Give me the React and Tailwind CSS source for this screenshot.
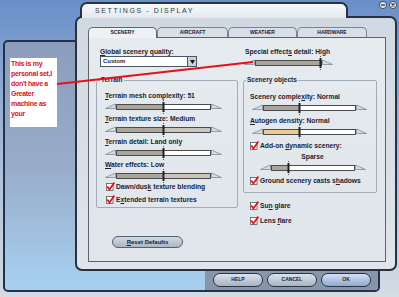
import React from 'react';

const txt = "font-['Liberation_Sans',Arial,sans-serif]";

const Tri = ({ dir }) => (
  <svg width="11" height="9" viewBox="0 0 11 9" className="shrink-0">
    {dir === 'left' ? (
      <polygon points="0.5,6.5 10.5,2 10.5,6.5" fill="#d6dde6" stroke="#7f8a9a" strokeWidth="0.8" />
    ) : (
      <polygon points="0.5,2 10.5,6.5 0.5,6.5" fill="#d6dde6" stroke="#7f8a9a" strokeWidth="0.8" />
    )}
  </svg>
);

const Slider = ({ w, at, left = 'bg-[#aba69d]', right = 'bg-white' }) => {
  const fill = Math.round(at * (w - 2));
  return (
    <div className="flex items-center h-[11px]">
      <Tri dir="left" />
      <div className="relative h-[6px] border border-[#4a4a4a] flex" style={{ width: w }}>
        <div className={left} style={{ width: fill }} />
        <div className={`flex-1 ${right}`} />
        <svg width="3" height="14" viewBox="0 0 3 14" className="absolute top-[-5px]" style={{ left: fill - 2 }}>
          <rect x="1" y="0" width="1" height="1" fill="#555" />
          <rect x="0.5" y="2" width="2" height="10" fill="#222" />
          <rect x="1" y="13" width="1" height="1" fill="#555" />
        </svg>
      </div>
      <Tri dir="right" />
    </div>
  );
};

const Label = ({ children, className = '' }) => (
  <div className={`text-[6.7px] leading-[8px] font-bold text-[#1b2130] whitespace-nowrap ${className}`}>{children}</div>
);

const Check = ({ children, className = '' }) => (
  <div className={`flex items-center gap-[1px] h-[9px] ${className}`}>
    <svg width="9" height="9" viewBox="0 0 9 9" className="shrink-0">
      <rect x="0.5" y="1.5" width="6.5" height="7" fill="#fff" stroke="#5a5a5a" strokeWidth="0.8" />
      <path d="M1.3 4.6 L3.4 7.6 L8.4 0.6" fill="none" stroke="#e0141c" strokeWidth="1.7" />
    </svg>
    <span className="text-[6.7px] font-bold leading-[8px] text-[#1b2130] whitespace-nowrap">{children}</span>
  </div>
);

const Item = ({ label, children }) => (
  <div className="flex flex-col">
    <Label>{label}</Label>
    <div className="mt-[1px]">{children}</div>
  </div>
);

const PillButton = ({ children, blue }) => (
  <div
    className={`w-[50px] h-[14px] rounded-full border border-[#2a3548] flex items-center justify-center text-[5px] font-bold text-[#1b2130] ${
      blue ? 'bg-gradient-to-b from-[#d3e0f2] to-[#8faad3]' : 'bg-gradient-to-b from-[#dbe2ea] to-[#a7b3c3]'
    }`}
  >
    {children}
  </div>
);

const Tab = ({ children, w, active }) => (
  <div
    className={`${w} flex items-center justify-center rounded-t-[5px] border border-b-0 text-[5px] font-bold text-[#1b2130] ${
      active ? 'h-[11px] -mb-px z-10 bg-[#eef2f5] border-[#5e6670]' : 'h-[10px] bg-[#d8dfe6] border-[#7a838e]'
    }`}
  >
    {children}
  </div>
);

const noteLines = ['This is my', 'personal set,I', "don't have a", 'Greater', 'machine as', 'your'];

export default function App() {
  return (
    <div className={`relative w-[399px] h-[297px] overflow-hidden bg-gradient-to-b from-[#6a8fc8] via-[#a3bbd8] to-[#d4dce4] ${txt}`}>
      {/* back window */}
      <div className="absolute left-[3px] top-[40px] w-[377px] h-[252px] rounded-[5px] border-2 border-[#25304a] bg-gradient-to-b from-[#8b9dbb] via-[#98acc9] to-[#a8d0f2] flex flex-col overflow-hidden">
        <div className="flex-1" />
        <div className="flex h-[22px]">
          <div className="flex-1" />
          <div className="w-[173px] bg-[#8795a9] flex items-center gap-[4px] pl-[8px] pt-[2px]">
            <PillButton>HELP</PillButton>
            <PillButton>CANCEL</PillButton>
            <PillButton blue>OK</PillButton>
          </div>
        </div>
      </div>

      {/* main dialog */}
      <div className="absolute left-[75px] top-[16px] w-[322px] h-[255px] rounded-[7px] border-2 border-[#283142] bg-gradient-to-b from-[#d0d8e1] to-[#dfe5ea] pt-[9px] pl-[11px] pr-[9px] pb-[7px] flex flex-col">
        <div className="flex items-end h-[10px]">
          <Tab w="w-[69px]" active>SCENERY</Tab>
          <Tab w="w-[71px]">AIRCRAFT</Tab>
          <Tab w="w-[69px]">WEATHER</Tab>
          <Tab w="w-[70px]">HARDWARE</Tab>
        </div>
        <div className="flex-1 border border-[#5c646e] bg-gradient-to-b from-[#e6ebef] to-[#dfe5ea] pt-[10px] pl-[7px] pr-[8px] flex gap-[5px]">
          {/* left column */}
          <div className="w-[142px] flex flex-col">
            <div className="pl-[4px]">
              <Label><u>G</u>lobal scenery quality:</Label>
              <div className="flex h-[11px] w-[97px] border border-[#4b5563] bg-white">
                <div className="flex-1 text-[6px] font-bold leading-[9px] pl-[2px] text-[#1b2130]">Custom</div>
                <div className="w-[9px] border-l border-[#4b5563] bg-[#c9d1db] flex items-center justify-center">
                  <svg width="5" height="4" viewBox="0 0 5 4"><polygon points="0,0 5,0 2.5,4" fill="#111" /></svg>
                </div>
              </div>
            </div>
            <fieldset className="mt-[9px] border border-[#a3acb6] rounded-[2px] pl-[8px] pr-[4px] pb-[3px]">
              <legend className="ml-[-5px] px-[1px] text-[6.5px] font-bold leading-[8px] text-[#1b2130]">Terrain</legend>
              <div className="flex flex-col gap-[3px] mt-[8px]">
                <Item label={<><u>T</u>errain mesh complexity: 51</>}><Slider w={95} at={0.5} /></Item>
                <Item label={<><u>T</u>errain texture size: Medium</>}><Slider w={95} at={0.5} right="bg-[#c9c5be]" /></Item>
                <Item label={<><u>T</u>errain detail: Land only</>}><Slider w={95} at={0.5} /></Item>
                <Item label={<><u>W</u>ater effects: Low</>}><Slider w={95} at={0.5} right="bg-[#c9c5be]" /></Item>
              </div>
              <div className="flex flex-col gap-[4px] mt-[1px] ml-[1px]">
                <Check>Dawn/dus<u>k</u> texture blending</Check>
                <Check>E<u>x</u>tended terrain textures</Check>
              </div>
            </fieldset>
            <div className="mt-[28px] ml-[16px] w-[71px] h-[12px] rounded-full border border-[#55606f] bg-gradient-to-b from-[#d3dbe4] to-[#aab6c5] flex items-center justify-center text-[6px] font-bold text-[#1b2130]">
              <span><u>R</u>eset Defaults</span>
            </div>
          </div>

          {/* right column */}
          <div className="w-[134px] flex flex-col">
            <Label className="pl-[2px]">Special effect<u>s</u> detail: High</Label>
            <div className="pl-[1px] mt-[1px]"><Slider w={67} at={1} right="bg-[#aba69d]" /></div>
            <fieldset className="mt-[8px] border border-[#a3acb6] rounded-[2px] pl-[6px] pr-[4px] pb-[7px]">
              <legend className="ml-[-4px] px-[1px] text-[6.5px] font-bold leading-[8px] text-[#1b2130]">Scenery objects</legend>
              <div className="flex flex-col gap-[4px] mt-[9px]">
                <Item label={<>Scenery comple<u>x</u>ity: Normal</>}><div className="ml-[2px]"><Slider w={93} at={0.4} /></div></Item>
                <Item label={<><u>A</u>utogen density: Normal</>}><div className="ml-[2px]"><Slider w={93} at={0.4} left="bg-[#eccb92]" /></div></Item>
              </div>
              <Check className="mt-[4px]">Add-on <u>d</u>ynamic scenery:</Check>
              <Label className="mt-[3px] ml-[10px] w-[105px] text-center">Sparse</Label>
              <div className="mt-[1px] ml-[10px]"><Slider w={84} at={0.21} /></div>
              <Check className="mt-[3px]">Ground scenery casts s<u>h</u>adows</Check>
            </fieldset>
            <div className="pl-[7px] flex flex-col gap-[6px] mt-[8px]">
              <Check>Su<u>n</u> glare</Check>
              <Check>Lens <u>f</u>lare</Check>
            </div>
          </div>
        </div>
      </div>

      {/* title tab */}
      <div className="absolute left-[80px] top-[2px] w-[268px] h-[16px] z-10 rounded-t-[7px] border-2 border-b-0 border-[#283142] bg-gradient-to-b from-[#f7f9fb] to-[#e4e9ee] pl-[13px] pt-[2px]">
        <div className="text-[7px] leading-[9px] tracking-[1.6px] text-[#333a44] whitespace-nowrap">SETTINGS - DISPLAY</div>
      </div>

      {/* window buttons */}
      <div className="absolute left-[379px] top-[1px] flex gap-[2px] z-10">
        <svg width="8" height="8" viewBox="0 0 8 8">
          <circle cx="4" cy="4" r="3.6" fill="#dfe5ec" stroke="#2a3346" strokeWidth="0.8" />
          <rect x="2" y="3.4" width="4" height="1.3" fill="#2a3346" />
        </svg>
        <svg width="8" height="8" viewBox="0 0 8 8">
          <circle cx="4" cy="4" r="3.6" fill="#dfe5ec" stroke="#2a3346" strokeWidth="0.8" />
          <path d="M2.5 2.5 L5.5 5.5 M5.5 2.5 L2.5 5.5" stroke="#2a3346" strokeWidth="1.1" />
        </svg>
      </div>

      {/* annotation */}
      <div className="absolute left-[10px] top-[58px] w-[47px] h-[69px] bg-white pl-[1px] pt-[1px] z-20">
        {noteLines.map((l) => (
          <div key={l} className="text-[7px] leading-[10px] font-bold text-[#e0101c] whitespace-nowrap tracking-[-0.3px]">{l}</div>
        ))}
      </div>
      <svg className="absolute inset-0 z-30 pointer-events-none" width="399" height="297">
        <line x1="57" y1="84" x2="253" y2="62" stroke="#e8101a" strokeWidth="2" />
      </svg>
    </div>
  );
}
